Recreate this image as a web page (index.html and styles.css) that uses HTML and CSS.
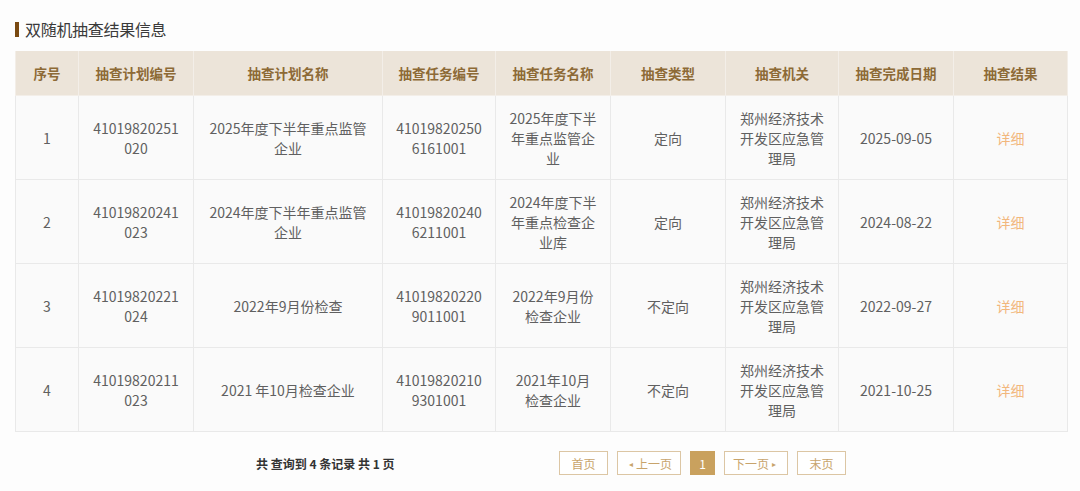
FILE: index.html
```html
<!DOCTYPE html>
<html lang="zh">
<head>
<meta charset="utf-8">
<link rel="stylesheet" href="styles.css">
</head>
<body>
<div class="page">
  <h2 class="title"><span class="mark"></span>双随机抽查结果信息</h2>
  <table class="grid">
    <colgroup>
      <col style="width:63px"><col style="width:115px"><col style="width:189px"><col style="width:113px"><col style="width:115px"><col style="width:115px"><col style="width:113px"><col style="width:115px"><col style="width:114px">
    </colgroup>
    <thead>
      <tr><th>序号</th><th>抽查计划编号</th><th>抽查计划名称</th><th>抽查任务编号</th><th>抽查任务名称</th><th>抽查类型</th><th>抽查机关</th><th>抽查完成日期</th><th>抽查结果</th></tr>
    </thead>
    <tbody>
      <tr><td>1</td><td>41019820251<br>020</td><td>2025年度下半年重点监管<br>企业</td><td>41019820250<br>6161001</td><td>2025年度下半<br>年重点监管企<br>业</td><td>定向</td><td>郑州经济技术<br>开发区应急管<br>理局</td><td>2025-09-05</td><td><a class="link">详细</a></td></tr>
      <tr><td>2</td><td>41019820241<br>023</td><td>2024年度下半年重点监管<br>企业</td><td>41019820240<br>6211001</td><td>2024年度下半<br>年重点检查企<br>业库</td><td>定向</td><td>郑州经济技术<br>开发区应急管<br>理局</td><td>2024-08-22</td><td><a class="link">详细</a></td></tr>
      <tr><td>3</td><td>41019820221<br>024</td><td>2022年9月份检查</td><td>41019820220<br>9011001</td><td>2022年9月份<br>检查企业</td><td>不定向</td><td>郑州经济技术<br>开发区应急管<br>理局</td><td>2022-09-27</td><td><a class="link">详细</a></td></tr>
      <tr><td>4</td><td>41019820211<br>023</td><td>2021 年10月检查企业</td><td>41019820210<br>9301001</td><td>2021年10月<br>检查企业</td><td>不定向</td><td>郑州经济技术<br>开发区应急管<br>理局</td><td>2021-10-25</td><td><a class="link">详细</a></td></tr>
    </tbody>
  </table>
  <div class="footer">
    <span class="summary">共 查询到 4 条记录 共 1 页</span>
    <div class="pager">
      <span class="btn w49">首页</span>
      <span class="btn w64"><span class="tri">◂</span>上一页</span>
      <span class="btn cur">1</span>
      <span class="btn w64">下一页<span class="tri">▸</span></span>
      <span class="btn w49">末页</span>
    </div>
  </div>
</div>
</body>
</html>
```
FILE: styles.css
```css
html, body {
  margin: 0;
  padding: 0;
  background: #fdfdfd;
}
.page {
  padding: 20px 13px 0 15px;
  font-family: "Microsoft YaHei", "Noto Sans CJK SC", "Liberation Sans", sans-serif;
}
.title {
  margin: 0 0 13px 0;
  height: 18px;
  display: flex;
  align-items: center;
  font-size: 16px;
  font-weight: normal;
  color: #3a3a3a;
  letter-spacing: -0.3px;
}
.mark {
  width: 4px;
  height: 15px;
  background: #7a4a12;
  margin-right: 6px;
}
.grid {
  width: 1052px;
  border-collapse: collapse;
  table-layout: fixed;
  background: #fafafa;
}
.grid th {
  height: 44px;
  padding: 0;
  background: #ece4d9;
  color: #8d6a36;
  font-size: 13.5px;
  font-weight: bold;
  border: 1px solid #f3eee8;
  border-top: none;
  text-align: center;
}
.grid td {
  height: 83px;
  padding: 0 4px;
  text-align: center;
  font-size: 14px;
  line-height: 20px;
  color: #606060;
  border: 1px solid #e9e9e9;
}
.link {
  color: #f2b77c;
}
.footer {
  display: flex;
  align-items: center;
  height: 24px;
  margin-top: 19px;
  padding-left: 241px;
}
.summary {
  font-size: 12px;
  color: #333;
  font-weight: bold;
  width: 303px;
}
.pager {
  display: flex;
  gap: 9px;
}
.btn {
  box-sizing: border-box;
  height: 24px;
  display: flex;
  align-items: center;
  justify-content: center;
  border: 1px solid #dcc6a4;
  color: #c8a46c;
  font-size: 12px;
  background: #fff;
}
.w49 { width: 49px; }
.w64 { width: 64px; }
.cur {
  width: 25px;
  background: #c9a15e;
  border-color: #c9a15e;
  color: #fff;
}
.tri {
  font-size: 8px;
  margin: 0 3px;
}
```
